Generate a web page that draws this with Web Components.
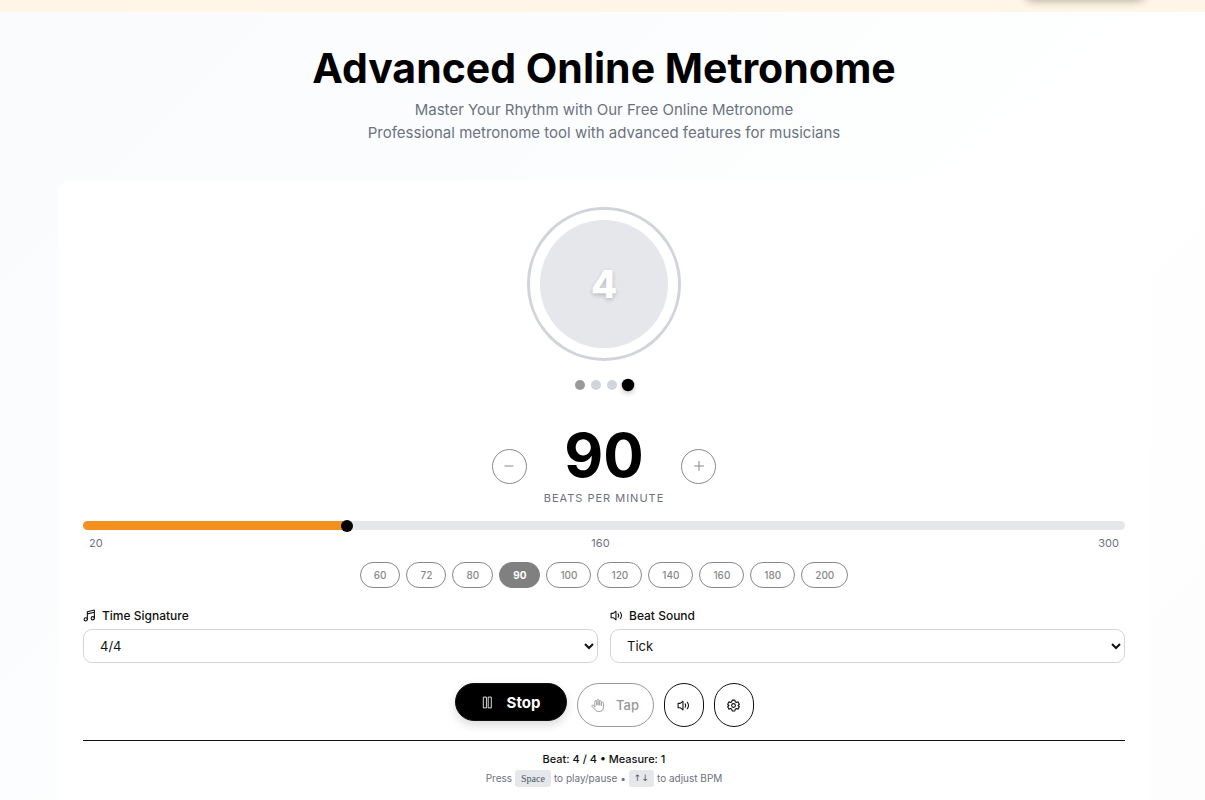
<!DOCTYPE html>
<html lang="en">
<head>
<meta charset="utf-8">
<meta name="viewport" content="width=device-width, initial-scale=1">
<title>Advanced Online Metronome</title>
<style>
  html, body { margin: 0; min-height: 100%; }
  body { font-family: Inter, "Open Sans", sans-serif; color: #111; background: #fff; }
</style>
</head>
<body>
<metronome-page>
  <page-hero slot="hero">
    <span slot="title">Advanced Online Metronome</span>
    <span slot="lead">Master Your Rhythm with Our Free Online Metronome</span>
    <span slot="note">Professional metronome tool with advanced features for musicians</span>
  </page-hero>
  <beat-display beat="4" beats="4"></beat-display>
  <tempo-control value="90"></tempo-control>
  <tempo-presets value="90"></tempo-presets>
  <sound-settings></sound-settings>
  <transport-bar></transport-bar>
  <status-line></status-line>
</metronome-page>

<script>
const SPEAKER = `<path d="M11 4 6 8H2v8h4l5 4z"/><path d="M15 9c1.300 2 1.300 4 0 6M19 6c3 4 3 8 0 12"/>`;
const icon = (body, size = 14, width = 1.6) =>
  `<svg width="${size}" height="${size}" viewBox="0 0 24 24" fill="none" stroke="currentColor" stroke-width="${width}" stroke-linejoin="round" stroke-linecap="round" aria-hidden="true">${body}</svg>`;

function define(name, render) {
  customElements.define(name, class extends HTMLElement {
    connectedCallback() {
      if (this.shadowRoot) return;
      this.attachShadow({ mode: "open" }).innerHTML =
        `<style>*{box-sizing:border-box} button,select,input{font-family:inherit;margin:0} svg{display:block;flex:none}</style>` + render(this);
    }
  });
}

define("metronome-page", () => `
  <style>
    :host { display: flex; flex-direction: column; min-height: 100vh; }
    .banner { height: 12px; background: #fff6e8; overflow: hidden; position: relative; flex: none; }
    .banner i { position: absolute; right: 60px; top: -40px; width: 120px; height: 40px; border-radius: 8px; box-shadow: 0 1px 8px rgba(60,60,30,.4); }
    main { flex: 1; display: flex; flex-direction: column; padding: 32px 55px 0 58px;
      background: linear-gradient(135deg, #f9fbfd 0%, #fdfefe 50%, #ffffff 60%, #fdfdfd 100%); }
    section { flex: 1; background: #fff; border-radius: 12px 12px 0 0; padding: 26px 25px 12px; }
  </style>
  <div class="banner"><i></i></div>
  <main>
    <slot name="hero"></slot>
    <section><slot></slot></section>
  </main>`);

define("page-hero", () => `
  <style>
    :host { display: block; text-align: center; padding-bottom: 37px; }
    h1 { margin: 0 0 5px; font-size: 41px; line-height: 49px; font-weight: 700; color: #000; }
    p { margin: 0; font-size: 15px; line-height: 23px; color: #6b7280; }
  </style>
  <h1><slot name="title"></slot></h1>
  <p><slot name="lead"></slot></p>
  <p><slot name="note"></slot></p>`);

define("beat-display", el => {
  const beat = +el.getAttribute("beat"), beats = +el.getAttribute("beats");
  const dots = Array.from({ length: beats }, (_, i) =>
    `<i class="${i + 1 === beat ? "on" : i === 0 ? "first" : ""}"></i>`).join("");
  return `
  <style>
    :host { display: flex; flex-direction: column; align-items: center; }
    .ring { width: 154px; height: 154px; border: 3px solid #d1d5db; border-radius: 50%; padding: 10px; }
    .face { height: 100%; border-radius: 50%; background: #e5e7eb; display: grid; place-items: center;
      color: #fff; font-size: 38px; font-weight: 800; text-shadow: 0 2px 4px rgba(0,0,0,.2); }
    .dots { display: flex; gap: 6px; height: 12px; align-items: center; margin-top: 18px; }
    i { width: 10px; height: 10px; border-radius: 50%; background: #d1d5db; }
    .first { background: #999; }
    .on { background: #000; transform: scale(1.25); box-shadow: 0 2px 4px rgba(0,0,0,.2); }
  </style>
  <div class="ring"><div class="face">${beat}</div></div>
  <div class="dots">${dots}</div>`;
});

define("tempo-control", el => {
  const v = +el.getAttribute("value"), pct = (v - 20) / 280 * 100;
  return `
  <style>
    :host { display: block; margin-top: 28px; }
    .row { display: flex; justify-content: center; align-items: center; gap: 17px; }
    .value { min-width: 118px; text-align: center; }
    output { display: block; font-size: 60px; line-height: 72px; font-weight: 700; color: #000; }
    small { display: block; font-size: 11px; line-height: 14px; letter-spacing: 1px; color: #6b7280; white-space: nowrap; }
    button { width: 35px; height: 35px; margin-top: 8px; padding: 0; border: 1px solid #888; border-radius: 50%; background: none; color: #888; display: grid; place-items: center; }
    input { -webkit-appearance: none; appearance: none; display: block; width: 100%; height: 9px; margin: 16px 0 7px; border-radius: 5px;
      background: linear-gradient(to right, #f29120 ${pct}%, #e5e7eb ${pct}%); }
    input::-webkit-slider-thumb { -webkit-appearance: none; width: 12px; height: 12px; border-radius: 50%; background: #000; }
    .scale { display: flex; justify-content: space-between; padding: 0 6px; font-size: 11px; line-height: 12px; color: #6b7280; }
  </style>
  <div class="row">
    <button aria-label="Decrease tempo">${icon('<path d="M4 12h16"/>', 12, 2)}</button>
    <div class="value"><output>${v}</output><small>BEATS PER MINUTE</small></div>
    <button aria-label="Increase tempo">${icon('<path d="M3 12h18M12 3v18"/>', 12, 2)}</button>
  </div>
  <input type="range" min="20" max="300" value="${v}" aria-label="Tempo">
  <div class="scale"><span>20</span><span>160</span><span>300</span></div>`;
});

define("tempo-presets", el => `
  <style>
    :host { display: flex; flex-wrap: wrap; justify-content: center; gap: 6px; margin-top: 13px; }
    button { height: 26px; min-width: 40px; padding: 0 13px; border: 1px solid #888; border-radius: 13px; background: none;
      color: #8a8a8a; font-size: 10px; font-weight: 500; }
    .on { background: #808080; border-color: #808080; color: #fff; font-weight: 700; }
  </style>
  ${[60, 72, 80, 90, 100, 120, 140, 160, 180, 200].map(n =>
    `<button class="${n == el.getAttribute("value") ? "on" : ""}">${n}</button>`).join("")}`);

define("sound-settings", () => `
  <style>
    :host { display: grid; grid-template-columns: 1fr 1fr; gap: 12px; margin-top: 19px; }
    label { display: flex; align-items: center; gap: 6px; height: 16px; margin-bottom: 6px; font-size: 12px; font-weight: 500; color: #111; }
    select { display: block; width: 100%; height: 34px; padding: 0 0 0 12px; border: 1px solid #d1d5db; border-radius: 9px; background: #fff; color: #111; font-size: 13px; }
  </style>
  <div>
    <label for="signature">${icon('<circle cx="5" cy="19" r="3"/><circle cx="18" cy="17" r="3"/><path d="M8 19V5l13-3v15M8 9l13-3"/>', 13, 2)}Time Signature</label>
    <select id="signature"><option>4/4</option><option>3/4</option><option>2/4</option><option>6/8</option></select>
  </div>
  <div>
    <label for="sound">${icon(SPEAKER, 13, 2)}Beat Sound</label>
    <select id="sound"><option>Tick</option><option>Click</option><option>Beep</option></select>
  </div>`);

define("transport-bar", () => `
  <style>
    :host { display: flex; justify-content: center; align-items: flex-start; gap: 10px; margin-top: 20px; }
    button { display: flex; align-items: center; justify-content: center; height: 44px; padding: 0; border: 1px solid #111;
      border-radius: 20px; background: #fff; color: #111; font-weight: 500; }
    .stop { width: 112px; height: 38px; gap: 13px; background: #000; color: #fff; font-size: 15px; font-weight: 700; box-shadow: 0 4px 10px rgba(0,0,0,.15); }
    .tap { width: 77px; gap: 12px; border-color: #999; border-radius: 22px; color: #999; font-size: 13px; }
    .round { width: 40px; }
  </style>
  <button class="stop">${icon('<path d="M5 2h5v20H5zM14 2h5v20h-5z"/>', 13, 1.6)}Stop</button>
  <button class="tap">${icon('<path d="M7 15V5a2 2 0 0 1 4 0v6M11 11V3a2 2 0 0 1 4 0v8M15 11V5a2 2 0 0 1 4 0v7M19 11V8a2 2 0 0 1 4 0v7c0 5-3 8-8 8-4 0-6-1-8-4l-5-5c-1-2 1-4 3-2l2 2"/>', 13, 1.8)}Tap</button>
  <button class="round" aria-label="Volume">${icon(SPEAKER, 13, 2)}</button>
  <button class="round" aria-label="Settings">${icon('<circle cx="12" cy="12" r="3.500"/><path d="M9.500 2h5l.7 3.200 2 1.200L20.300 5.300l2.500 4.400L20.500 12l2.300 2.300-2.500 4.400-3.100-1.100-2 1.200-.7 3.200h-5l-.7-3.200-2-1.200-3.100 1.100-2.500-4.400L3.500 12 1.200 9.700l2.500-4.400 3.100 1.100 2-1.200z"/>', 13, 2)}</button>`);

define("status-line", () => `
  <style>
    :host { display: block; margin-top: 13px; padding-top: 10px; border-top: 1px solid #111; text-align: center; }
    p { margin: 0; }
    .beat { font-size: 11px; line-height: 16px; font-weight: 500; color: #111; }
    .hint { margin-top: 3px; display: flex; justify-content: center; align-items: center; gap: 3px; font-size: 10px; line-height: 17px; color: #6b7280; }
    kbd { height: 17px; padding: 0 6px; border-radius: 3px; background: #e5e7eb; font-family: "Liberation Serif", serif; font-size: 10px; color: #4b5563; }
    .arrows { padding: 0 5px; font-family: "DejaVu Sans", sans-serif; font-size: 9px; }
  </style>
  <p class="beat">Beat: 4 / 4 • Measure: 1</p>
  <p class="hint"><span>Press</span><kbd>Space</kbd><span>to play/pause •</span><kbd class="arrows">↑↓</kbd><span>to adjust BPM</span></p>`);
</script>
</body>
</html>
